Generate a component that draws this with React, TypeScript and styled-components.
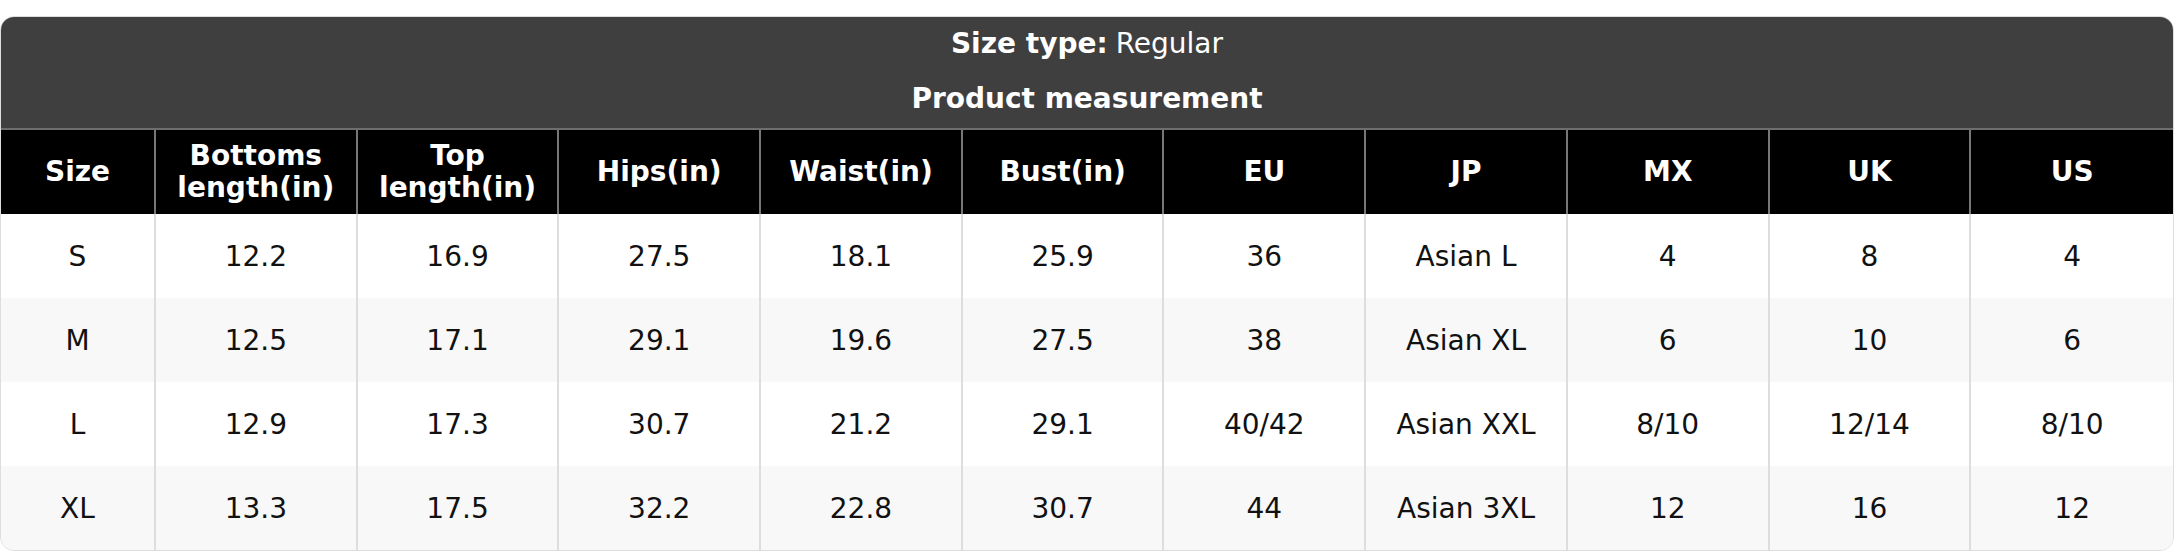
import React from 'react';
import styled, { createGlobalStyle } from 'styled-components';

const GlobalStyle = createGlobalStyle`
  html, body {
    margin: 0;
    padding: 0;
    background: #ffffff;
  }

  body {
    padding-top: 16px;
    font-family: 'DejaVu Sans', 'Liberation Sans', sans-serif;
  }
`;

const Card = styled.div`
  width: 2174px;
  box-sizing: border-box;
  border: 1px solid #dddddd;
  border-radius: 14px;
  overflow: hidden;
  background: #ffffff;
`;

const TitleBlock = styled.div`
  background: #3f3f3f;
  color: #ffffff;
  padding-bottom: 2px;
  border-bottom: 2px solid #6e6e6e;
`;

const TitleRow = styled.div<{ $bold?: boolean; $tall?: boolean }>`
  height: ${({ $tall }) => ($tall ? 56 : 53)}px;
  display: flex;
  align-items: center;
  justify-content: center;
  font-size: 28px;
  font-weight: ${({ $bold }) => ($bold ? 700 : 400)};
`;

const Label = styled.span`
  font-weight: 700;
  margin-right: 8px;
`;

const Grid = styled.div`
  display: grid;
  grid-template-columns: 155px repeat(10, 1fr);
`;

const HeadCell = styled.div`
  height: 84px;
  display: flex;
  align-items: center;
  justify-content: center;
  text-align: center;
  background: #000000;
  color: #ffffff;
  font-size: 28px;
  font-weight: 700;
  line-height: 32px;
  border-right: 2px solid #777777;

  &:nth-child(11) {
    border-right: none;
  }
`;

const Cell = styled.div<{ $shaded: boolean; $last: boolean }>`
  height: 84px;
  display: flex;
  align-items: center;
  justify-content: center;
  background: ${({ $shaded }) => ($shaded ? '#f8f8f8' : '#ffffff')};
  color: #111111;
  font-size: 28px;
  border-right: ${({ $last }) => ($last ? 'none' : '2px solid #dddddd')};
`;

const headers = [
  'Size',
  'Bottoms\nlength(in)',
  'Top\nlength(in)',
  'Hips(in)',
  'Waist(in)',
  'Bust(in)',
  'EU',
  'JP',
  'MX',
  'UK',
  'US',
];

const rows = [
  ['S', '12.2', '16.9', '27.5', '18.1', '25.9', '36', 'Asian L', '4', '8', '4'],
  ['M', '12.5', '17.1', '29.1', '19.6', '27.5', '38', 'Asian XL', '6', '10', '6'],
  ['L', '12.9', '17.3', '30.7', '21.2', '29.1', '40/42', 'Asian XXL', '8/10', '12/14', '8/10'],
  ['XL', '13.3', '17.5', '32.2', '22.8', '30.7', '44', 'Asian 3XL', '12', '16', '12'],
];

function App() {
  return (
    <>
      <GlobalStyle />
      <Card>
        <TitleBlock>
          <TitleRow>
            <Label>Size type:</Label>Regular
          </TitleRow>
          <TitleRow $bold $tall>
            Product measurement
          </TitleRow>
        </TitleBlock>
        <Grid>
          {headers.map((h) => (
            <HeadCell key={h}>
              <span>
                {h.split('\n').map((line, i) => (
                  <React.Fragment key={line}>
                    {i > 0 && <br />}
                    {line}
                  </React.Fragment>
                ))}
              </span>
            </HeadCell>
          ))}
          {rows.map((row, r) =>
            row.map((value, c) => (
              <Cell
                key={`${r}-${c}`}
                $shaded={r % 2 === 1}
                $last={c === row.length - 1}
              >
                {value}
              </Cell>
            )),
          )}
        </Grid>
      </Card>
    </>
  );
}

export default App;
